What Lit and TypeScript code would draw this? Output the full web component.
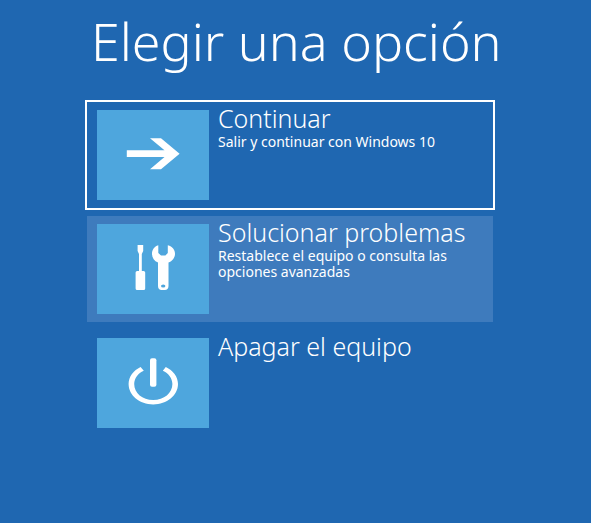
import { LitElement, html, css, svg, TemplateResult } from "lit";
import { customElement, property } from "lit/decorators.js";
import { classMap } from "lit/directives/class-map.js";

type IconName = "arrow" | "tools" | "power";

interface Option {
  icon: IconName;
  title: string;
  detail?: string;
  state?: "focused" | "hovered";
}

const icons: Record<IconName, TemplateResult> = {
  arrow: svg`<path d="M53 28.3H64L82.6 43.7L64 59.3H53L67.5 47H29.8V40.2H67.5Z" />`,
  tools: svg`
    <path d="M40.6 21H46.2V27L44.8 30V47H46.6Q48.2 47 48.2 48.6V64.4Q48.2 66 46.6 66H40.2Q38.6 66 38.6 64.4V48.6Q38.6 47 40.2 47H42V30L40.6 27Z" />
    <path fill-rule="evenodd" d="M61.3 21.3V29L64 31.4H68.4L70.8 29V21.3C75.5 22.5 78 26 78 29.8C78 34 75.3 37 71.5 38.6V62C71.5 64.6 70 66 67.8 66H64.6C62.4 66 61 64.6 61 62V38.6C57.3 37 55 34 55 29.8C55 26 57.2 22.5 61.3 21.3ZM64 62a2.2 1.6 0 1 0 4.4 0a2.2 1.6 0 1 0 -4.4 0Z" />`,
  power: svg`
    <path fill-rule="evenodd" d="M43.6 28.9C36.5 32.3 31.6 38.6 31.6 46C31.6 57.4 42.6 66.4 56.2 66.4S81 57.4 81 46C81 38.6 76 32.3 68.8 28.9L65.8 32.7C71.6 35.3 75.4 40.2 75.4 46C75.4 55 67 62 56.2 62S37.2 55 37.2 46C37.2 40.2 41 35.3 46.8 32.7Z" />
    <rect x="53" y="20.2" width="6.4" height="28.6" rx="2" />`,
};

@customElement("option-tile")
export class OptionTile extends LitElement {
  @property({ attribute: false }) option!: Option;

  static styles = css`
    :host {
      display: block;
    }
    .tile {
      display: flex;
      align-items: flex-start;
      gap: 9px;
      width: 100%;
      min-height: 106px;
      padding: 8px 10px;
      box-sizing: border-box;
      border: 0;
      background: transparent;
      color: #fff;
      font: inherit;
      text-align: left;
      cursor: pointer;
    }
    .tile.hovered,
    .tile:hover {
      background: #3e7bbd;
    }
    .tile.focused,
    .tile:focus-visible {
      outline: 2px solid #fff;
    }
    .icon {
      flex: none;
      width: 112px;
      height: 90px;
      background: #4ea6dd;
      fill: #fff;
    }
    .text {
      display: flex;
      flex-direction: column;
      min-width: 0;
    }
    .title {
      margin-top: -8px;
      font-size: 25px;
      line-height: 32px;
      font-weight: 300;
    }
    .detail {
      font-size: 14px;
      line-height: 16px;
    }
  `;

  render() {
    const { icon, title, detail, state } = this.option;
    return html`
      <button
        type="button"
        class=${classMap({
          tile: true,
          focused: state === "focused",
          hovered: state === "hovered",
        })}
      >
        <svg class="icon" viewBox="0 0 112 90" aria-hidden="true">${icons[icon]}</svg>
        <span class="text">
          <span class="title">${title}</span>
          ${detail ? html`<span class="detail">${detail}</span>` : ""}
        </span>
      </button>
    `;
  }
}

@customElement("app-root")
export class AppRoot extends LitElement {
  private options: Option[] = [
    {
      icon: "arrow",
      title: "Continuar",
      detail: "Salir y continuar con Windows 10",
      state: "focused",
    },
    {
      icon: "tools",
      title: "Solucionar problemas",
      detail: "Restablece el equipo o consulta las opciones avanzadas",
      state: "hovered",
    },
    { icon: "power", title: "Apagar el equipo" },
  ];

  static styles = css`
    :host {
      display: block;
      min-height: 100vh;
      padding: 8px 98px 24px 87px;
      box-sizing: border-box;
      background: #1f67b1;
      color: #fff;
      font-family: "Noto Sans", "Open Sans", sans-serif;
    }
    .heading {
      margin: 0 0 28px;
      padding-left: 4px;
      font-size: 52px;
      line-height: 66px;
      font-weight: 300;
      white-space: nowrap;
    }
    .options {
      display: grid;
      gap: 8px;
    }
  `;

  render() {
    return html`
      <h1 class="heading">Elegir una opción</h1>
      <main class="options">
        ${this.options.map((o) => html`<option-tile .option=${o}></option-tile>`)}
      </main>
    `;
  }
}
